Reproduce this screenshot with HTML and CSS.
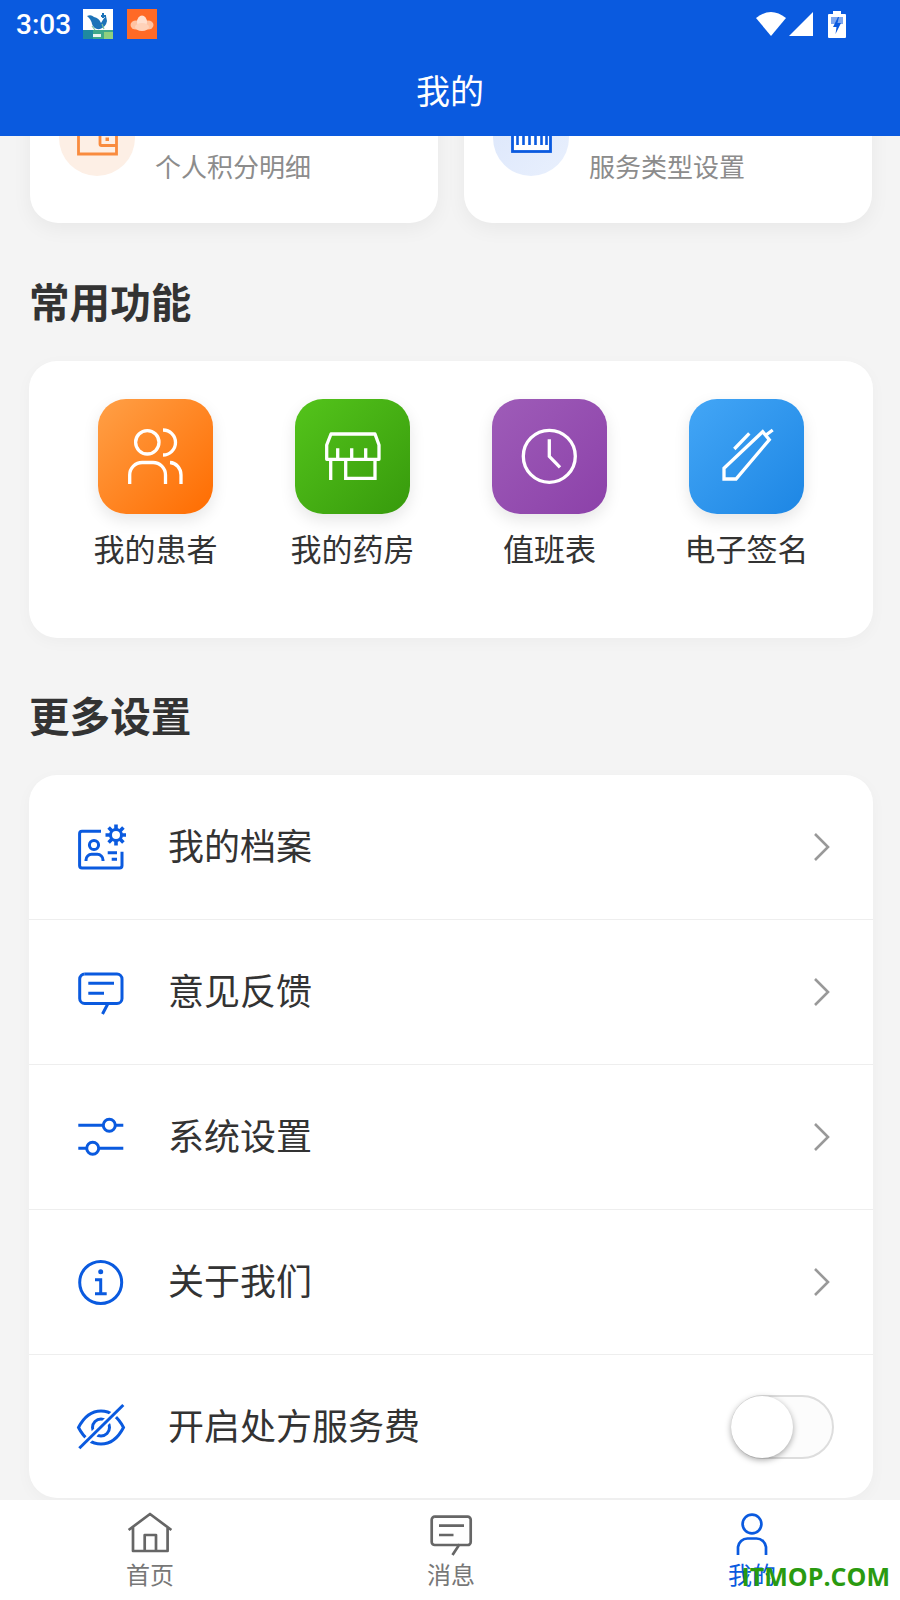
FILE: index.html
```html
<!DOCTYPE html>
<html lang="zh-CN">
<head>
    <meta charset="UTF-8">
    <meta name="viewport" content="width=device-width, initial-scale=1.0">
    <title>我的</title>
    <link rel="stylesheet" href="styles.css">
</head>
<body>
<div class="app">
    <header class="header">
        <div class="statusBar">
            <span class="time">3:03</span>
            <svg class="notifyIcon" viewBox="0 0 30 30">
                <rect width="30" height="30" fill="#fff"/>
                <path d="M4 7 Q8 5 11 8 Q16 9 18 14 Q20 10 23 7 L24 12 Q23 18 17 20 Q11 21 9 15 Q8 10 4 7Z" fill="#1c73b8"/>
                <path d="M19 4h2v2h2v2h-2v1h-2V8h-1V6h1z" fill="#1c73b8"/>
                <path d="M9 17l3 4M19 15l2 5" stroke="#7cc3a0" stroke-width="1.2"/>
                <rect y="21" width="30" height="9" fill="#3fa98a"/>
                <rect y="21" width="10" height="9" fill="#1f8aa0"/>
                <rect x="21" y="23" width="9" height="7" fill="#8fd07f"/>
                <rect x="10" y="25" width="8" height="3" fill="#e9f7ef"/>
            </svg>
            <svg class="notifyIcon" viewBox="0 0 30 30">
                <rect width="30" height="30" fill="#ff6a26"/>
                <ellipse cx="9" cy="16" rx="5.5" ry="4.5" fill="#ffc3a2"/>
                <ellipse cx="21" cy="16" rx="5.5" ry="4.5" fill="#ffc3a2"/>
                <ellipse cx="15" cy="13" rx="5" ry="6.5" fill="#ffe0cf"/>
                <ellipse cx="15" cy="18" rx="7" ry="4" fill="#ffd2b9"/>
            </svg>
            <div class="statusRight">
                <svg class="wifi" viewBox="0 0 30 24"><path d="M0 6 Q15 -6 30 6 L15 24Z" fill="#fff"/></svg>
                <svg class="signal" viewBox="0 0 24 24"><path d="M0 24 L24 0 V24Z" fill="#fff"/></svg>
                <svg class="battery" viewBox="0 0 18 27">
                    <path d="M5 0h8v3h4a1 1 0 0 1 1 1v22a1 1 0 0 1-1 1H1a1 1 0 0 1-1-1V4a1 1 0 0 1 1-1h4z" fill="#fff"/>
                    <rect x="3" y="6" width="12" height="7" fill="#7fa8ef"/>
                    <path d="M10 6 L5 16 H8.5 L7.5 23 L13 12 H9.5 L11 6Z" fill="#0a5adf"/>
                </svg>
            </div>
        </div>
        <h1 class="pageTitle">我的</h1>
    </header>

    <main class="content">
        <div class="statRow">
            <div class="statCard">
                <div class="statCircle statOrange">
                    <svg viewBox="0 0 44 40" class="statIcon">
                        <path d="M3.5 1.5 V36 H41.5 V1.5" fill="none" stroke="#f98b3e" stroke-width="2.8"/>
                        <path d="M25 5 V26 a1.5 1.5 0 0 0 1.5 1.5 H41" fill="none" stroke="#f98b3e" stroke-width="2.8"/>
                        <rect x="30.5" y="19.5" width="3.5" height="3.5" fill="#f98b3e"/>
                    </svg>
                </div>
                <div class="statSub">个人积分明细</div>
            </div>
            <div class="statCard">
                <div class="statCircle statBlue">
                    <svg viewBox="0 0 44 40" class="statIcon">
                        <rect x="3.5" y="1.5" width="38" height="32" fill="#fff" stroke="#0a5adf" stroke-width="2.8"/>
                        <path d="M8.5 2V27M14.5 2V27M20.5 2V27M26.5 2V27M32.5 2V27M37.5 2V27" stroke="#0a5adf" stroke-width="2.6"/>
                    </svg>
                </div>
                <div class="statSub">服务类型设置</div>
            </div>
        </div>

        <h2 class="sectionTitle">常用功能</h2>
        <section class="card funcGrid">
            <div class="funcItem">
                <div class="funcTile tileOrange">
                    <svg viewBox="0 0 115 115" class="tileSvg">
                        <circle cx="49.3" cy="43.3" r="11.7"/>
                        <path d="M65 31 a12.5 12.5 0 0 1 0 25"/>
                        <path d="M31.7 85 V76 a12.5 12.5 0 0 1 12.5 -12.5 H55 a12.5 12.5 0 0 1 12.5 12.5 V85"/>
                        <path d="M72 63.5 a11.5 12.5 0 0 1 11 12.5 V85"/>
                    </svg>
                </div>
                <div class="funcLabel">我的患者</div>
            </div>
            <div class="funcItem">
                <div class="funcTile tileGreen">
                    <svg viewBox="0 0 115 115" class="tileSvg">
                        <path d="M36 35 H80 L84 46 V60.3 H31.7 V46Z" stroke-linejoin="round"/>
                        <path d="M42.7 49.3V60.3M56.7 49.3V60.3M70.7 49.3V60.3"/>
                        <path d="M35.7 60.3V81M80 60.3V79.3H50.7V60.3"/>
                    </svg>
                </div>
                <div class="funcLabel">我的药房</div>
            </div>
            <div class="funcItem">
                <div class="funcTile tilePurple">
                    <svg viewBox="0 0 115 115" class="tileSvg">
                        <circle cx="57.3" cy="57.3" r="26"/>
                        <path d="M57.3 40.3V57.3L68 68.3"/>
                    </svg>
                </div>
                <div class="funcLabel">值班表</div>
            </div>
            <div class="funcItem">
                <div class="funcTile tileBlue">
                    <svg viewBox="0 0 115 115" class="tileSvg">
                        <path d="M35 80 V69.3 L73.7 32.7 L80.3 40.7 L47 80Z"/>
                        <path d="M77 36L83.7 31M45.3 50L60.3 34.3"/>
                    </svg>
                </div>
                <div class="funcLabel">电子签名</div>
            </div>
        </section>

        <h2 class="sectionTitle">更多设置</h2>
        <section class="card">
            <div class="listRow">
                <svg viewBox="0 0 50 50" class="rowIcon">
                    <path d="M25 9.3H6a2.4 2.4 0 0 0-2.4 2.4V43.6A2.4 2.4 0 0 0 6 46H43.6A2.4 2.4 0 0 0 46 43.6V29.7"/>
                    <circle cx="40" cy="13" r="5.5"/>
                    <path d="M40 2.5v4.5M40 19v4.5M29.5 13h4.5M46 13h4.5M32.6 5.6l3.2 3.2M44.2 17.2l3.2 3.2M47.4 5.6l-3.2 3.2M35.8 17.2l-3.2 3.2" class="gearTeeth"/>
                    <circle cx="18" cy="23" r="4.6"/>
                    <path d="M10 39v-1a5.7 5.7 0 0 1 5.7-5.7h5.6a5.7 5.7 0 0 1 5.7 5.7v1"/>
                    <path d="M31.7 30.7H41M35.7 37.3H41"/>
                </svg>
                <span class="rowText">我的档案</span>
                <svg viewBox="0 0 18 30" class="chevron"><path d="M2 2L15 15L2 28"/></svg>
            </div>
            <div class="listRow">
                <svg viewBox="0 0 50 50" class="rowIcon">
                    <path d="M8.7 7H41a5 5 0 0 1 5 5V31.5a5 5 0 0 1-5 5H32L26.5 47"/>
                    <path d="M32 36.5H8.7a5 5 0 0 1-5-5V12a5 5 0 0 1 5-5"/>
                    <path d="M12.3 16.3H38M12.3 26.3H28"/>
                </svg>
                <span class="rowText">意见反馈</span>
                <svg viewBox="0 0 18 30" class="chevron"><path d="M2 2L15 15L2 28"/></svg>
            </div>
            <div class="listRow">
                <svg viewBox="0 0 50 50" class="rowIcon">
                    <path d="M2.3 13.3H47.3M2.3 36.3H47.3"/>
                    <circle cx="33.3" cy="13.3" r="6" fill="#fff"/>
                    <circle cx="16.7" cy="36.3" r="6" fill="#fff"/>
                </svg>
                <span class="rowText">系统设置</span>
                <svg viewBox="0 0 18 30" class="chevron"><path d="M2 2L15 15L2 28"/></svg>
            </div>
            <div class="listRow">
                <svg viewBox="0 0 50 50" class="rowIcon">
                    <circle cx="24.7" cy="25.5" r="21"/>
                    <circle cx="24.7" cy="14.8" r="2.5" class="solid"/>
                    <path d="M19 22.8H24.7V36.8M19 36.8H30.7"/>
                </svg>
                <span class="rowText">关于我们</span>
                <svg viewBox="0 0 18 30" class="chevron"><path d="M2 2L15 15L2 28"/></svg>
            </div>
            <div class="listRow lastRow">
                <svg viewBox="0 0 50 50" class="rowIcon">
                    <path d="M2.5 25.5Q11 9 25 9T47.5 25.5Q39 42 25 42T2.5 25.5Z"/>
                    <circle cx="25" cy="25.5" r="8.5"/>
                    <path d="M3.3 46.3L47.3 3" class="slashGap"/>
                    <path d="M3.3 46.3L47.3 3"/>
                </svg>
                <span class="rowText">开启处方服务费</span>
                <div class="toggle"><div class="knob"></div></div>
            </div>
        </section>
    </main>

    <nav class="tabBar">
        <div class="tabItem">
            <svg viewBox="0 0 50 44" class="tabIcon">
                <path d="M3.6 18L25 2L46.4 18M8 15V39H42.6V15M19.7 39V23H31V39" stroke-linejoin="round"/>
            </svg>
            <span class="tabLabel">首页</span>
        </div>
        <div class="tabItem">
            <svg viewBox="0 0 50 44" class="tabIcon">
                <path d="M9 4.7H41.5a3 3 0 0 1 3.2 3V30a3 3 0 0 1-3.2 3H33L26.5 43"/>
                <path d="M33 33H9a3 3 0 0 1-3.3-3V7.7a3 3 0 0 1 3.3-3"/>
                <path d="M13 13.7H38M13 23H27.5"/>
            </svg>
            <span class="tabLabel">消息</span>
        </div>
        <div class="tabItem tabActive">
            <svg viewBox="0 0 50 44" class="tabIcon">
                <circle cx="25" cy="12" r="9.4"/>
                <path d="M11 43V35A9.5 9.5 0 0 1 20.5 26.5H29.5A9.5 9.5 0 0 1 39 35V43"/>
            </svg>
            <span class="tabLabel">我的</span>
        </div>
    </nav>

    <div class="watermark">ITMOP.COM</div>
</div>
</body>
</html>
```

FILE: styles.css
```css
body {
    margin: 0;
    background-color: #f4f4f4;
    font-family: "Noto Sans CJK SC", "Noto Sans", sans-serif;
    color: #333;
}

.app {
    position: relative;
    display: flex;
    flex-direction: column;
    width: 900px;
    height: 1600px;
    overflow: hidden;
}

/* top bar */
.header {
    position: relative;
    z-index: 2;
    flex: 0 0 136px;
    display: flex;
    flex-direction: column;
    background-color: #0a5adf;
    color: #fff;
}
.statusBar {
    flex: 0 0 48px;
    display: flex;
    align-items: center;
    gap: 14px;
    padding-left: 16px;
}
.time {
    margin-right: -2px;
    font-family: Roboto, sans-serif;
    font-size: 28px;
    font-weight: 500;
}
.notifyIcon {
    width: 30px;
    height: 30px;
}
.statusRight {
    display: flex;
    align-items: center;
    margin-left: auto;
    margin-right: 54px;
}
.wifi {
    width: 30px;
    height: 24px;
    margin-right: 3px;
}
.signal {
    width: 24px;
    height: 24px;
    margin-right: 15px;
}
.battery {
    width: 18px;
    height: 27px;
}
.pageTitle {
    flex: 1;
    margin: 0;
    text-align: center;
    line-height: 84px;
    font-size: 34px;
    font-weight: 400;
}

/* scrolled content */
.content {
    flex: 1;
    min-height: 0;
    overflow: hidden;
    padding: 0 27px 0 29px;
}

.statRow {
    display: flex;
    gap: 26px;
    margin: -64px 1px 0 1px;
}
.statCard {
    flex: 1;
    display: flex;
    gap: 20px;
    height: 151px;
    padding: 28px 29px 0;
    box-sizing: border-box;
    background-color: #fff;
    border-radius: 28px;
    box-shadow: 0 6px 20px rgba(0, 0, 0, 0.05);
}
.statCircle {
    flex: 0 0 76px;
    display: flex;
    align-items: center;
    justify-content: center;
    height: 76px;
    border-radius: 50%;
}
.statOrange {
    background-color: #fdefe5;
}
.statBlue {
    background: linear-gradient(135deg, #dbe6fb, #e9f0fd);
}
.statIcon {
    width: 44px;
    height: 40px;
}
.statSub {
    margin-top: 46px;
    font-size: 26px;
    line-height: 40px;
    color: #8c8c8c;
}

.sectionTitle {
    margin: 49px 0 32px;
    font-size: 40.6px;
    line-height: 56px;
    font-weight: 700;
    color: #333;
}
.statRow + .sectionTitle {
    margin-top: 50px;
}

.card {
    background-color: #fff;
    border-radius: 28px;
    box-shadow: 0 4px 16px rgba(0, 0, 0, 0.03);
}

.funcGrid {
    display: grid;
    grid-template-columns: repeat(4, 197px);
    padding: 38px 28px 70px;
}
.funcItem {
    display: flex;
    flex-direction: column;
    align-items: center;
}
.funcTile {
    width: 115px;
    height: 115px;
    border-radius: 28px;
    box-shadow: 0 6px 16px rgba(0, 0, 0, 0.1);
}
.tileOrange { background: linear-gradient(135deg, #ffa047, #ff6c00); }
.tileGreen { background: linear-gradient(135deg, #54c41b, #379a0c); }
.tilePurple { background: linear-gradient(135deg, #9e5cb8, #8c41a9); }
.tileBlue { background: linear-gradient(135deg, #43a6f6, #1d86e4); }
.tileSvg {
    display: block;
    width: 115px;
    height: 115px;
    fill: none;
    stroke: #fff;
    stroke-width: 3.3;
}
.funcLabel {
    margin-top: 14px;
    font-size: 31px;
    line-height: 40px;
    color: #333;
}

.listRow {
    display: flex;
    align-items: center;
    height: 144px;
    padding: 0 42px 0 47px;
    border-bottom: 1px solid #eee;
}
.lastRow {
    height: 143px;
    padding-right: 39px;
    border-bottom: none;
}
.rowIcon {
    flex: 0 0 50px;
    width: 50px;
    height: 50px;
    fill: none;
    stroke: #0a5adf;
    stroke-width: 3;
}
.rowIcon .solid {
    fill: #0a5adf;
    stroke: none;
}
.rowIcon .slashGap {
    stroke: #fff;
    stroke-width: 7;
}
.rowIcon .gearTeeth {
    stroke-width: 3.6;
}
.rowText {
    margin: 0 0 6px 42px;
    font-size: 36px;
    color: #333;
}
.chevron {
    margin-left: auto;
    width: 18px;
    height: 30px;
    fill: none;
    stroke: #999;
    stroke-width: 2.6;
}
.toggle {
    position: relative;
    margin-left: auto;
    width: 103px;
    height: 64px;
    box-sizing: border-box;
    border: 2px solid #ddd;
    border-radius: 32px;
    background-color: #fcfcfc;
}
.knob {
    position: absolute;
    top: -1px;
    left: -2px;
    width: 62px;
    height: 62px;
    border-radius: 50%;
    background-color: #fff;
    box-shadow: 0 2px 6px rgba(0, 0, 0, 0.35);
}

/* bottom tabs */
.tabBar {
    flex: 0 0 100px;
    display: grid;
    grid-template-columns: 300px 302px 298px;
    background-color: #fff;
    color: #777;
}
.tabItem {
    display: flex;
    flex-direction: column;
    align-items: center;
    padding-top: 12px;
}
.tabIcon {
    width: 50px;
    height: 44px;
    fill: none;
    stroke: #666;
    stroke-width: 2.7;
}
.tabLabel {
    margin-top: 1px;
    font-size: 24px;
    line-height: 34px;
}
.tabActive {
    padding-left: 2px;
    color: #0a5adf;
}
.tabActive .tabIcon {
    stroke: #0a5adf;
}

.watermark {
    position: absolute;
    right: 10px;
    bottom: 6px;
    font-family: "Open Sans", sans-serif;
    font-size: 25px;
    font-weight: 700;
    line-height: 36px;
    color: #2a9a10;
}
```
